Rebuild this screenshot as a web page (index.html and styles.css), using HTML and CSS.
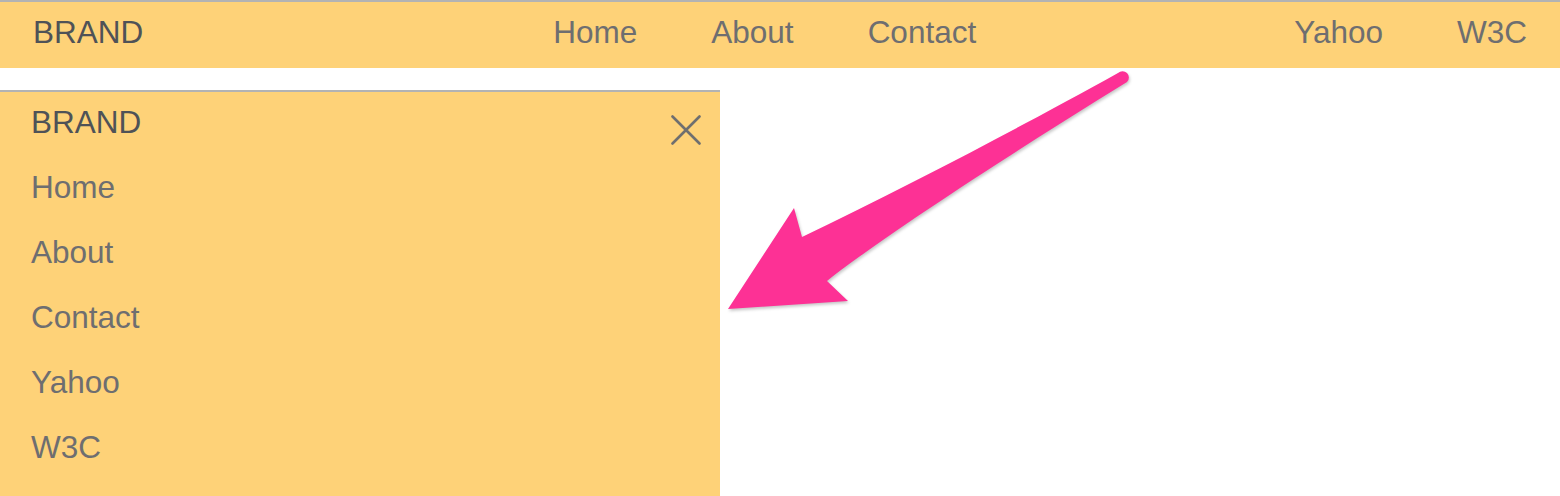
FILE: index.html
```html
<!DOCTYPE html>
<html lang="en">
<head>
<meta charset="utf-8">
<title>Navbar</title>
<link rel="stylesheet" href="styles.css">
</head>
<body>
<header class="topbar">
  <a class="brand" href="#">BRAND</a>
  <nav class="menu menu-main">
    <a href="#">Home</a>
    <a href="#">About</a>
    <a href="#">Contact</a>
  </nav>
  <nav class="menu menu-right">
    <a href="#">Yahoo</a>
    <a href="#">W3C</a>
  </nav>
</header>

<aside class="drawer">
  <a class="brand" href="#">BRAND</a>
  <a href="#">Home</a>
  <a href="#">About</a>
  <a href="#">Contact</a>
  <a href="#">Yahoo</a>
  <a href="#">W3C</a>
  <button class="close" aria-label="Close">
    <svg width="30" height="30" viewBox="0 0 30 30"><path d="M1.5 1.5 L28.5 28.5 M28.5 1.5 L1.5 28.5" stroke="#6f6f6f" stroke-width="2.6" stroke-linecap="round" fill="none"/></svg>
  </button>
</aside>

<svg class="arrow" width="1560" height="496" viewBox="0 0 1560 496">
  <path d="M1118 73 C1030 122 910 185 802 237 L794 208 L728 309 L848 301 L827 281 C870 246 1000 160 1127 82 A5.2 5.2 0 0 0 1118 73 Z" fill="#fd3195"/>
</svg>
</body>
</html>
```

FILE: styles.css
```css
* { box-sizing: border-box; }

html, body {
  margin: 0;
  padding: 0;
  background: #ffffff;
  overflow: hidden;
}

body {
  font-family: "Liberation Sans", Arial, Helvetica, sans-serif;
  font-size: 31.5px;
  position: relative;
  height: 496px;
}

a {
  text-decoration: none;
  color: #6e6e70;
}

.brand {
  color: #4f5257;
}

.topbar {
  display: flex;
  align-items: flex-start;
  height: 68px;
  padding: 12px 33px 0 33px;
  border-top: 2px solid #b3b3b3;
  background: #fed278;
  line-height: 36px;
}

.menu {
  display: flex;
}

.menu-main {
  margin-left: 410px;
  gap: 74px;
}

.menu-right {
  margin-left: auto;
  gap: 74px;
}

.drawer {
  position: relative;
  display: flex;
  flex-direction: column;
  align-items: flex-start;
  gap: 29px;
  width: 720px;
  height: 420px;
  margin-top: 22px;
  padding: 12px 0 0 31px;
  border-top: 2px solid #b3b3b3;
  background: #fed278;
  line-height: 36px;
}

.close {
  position: absolute;
  top: 23px;
  right: 19px;
  width: 30px;
  height: 30px;
  padding: 0;
  border: 0;
  background: transparent;
}

.close svg { display: block; }

.arrow {
  position: absolute;
  top: 0;
  left: 0;
  pointer-events: none;
  filter: drop-shadow(1px 2px 1.5px rgba(0, 0, 0, 0.22));
}
```
